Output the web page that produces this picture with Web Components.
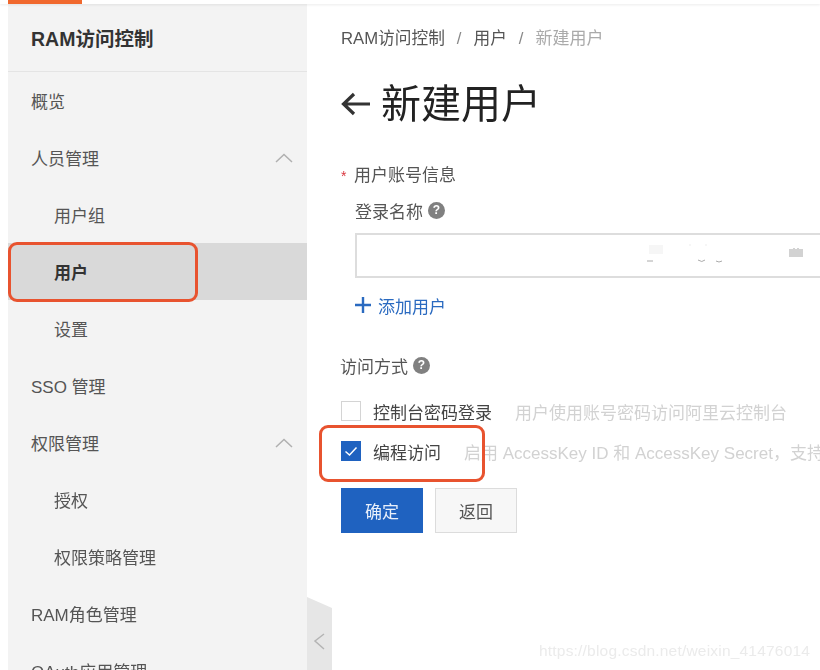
<!DOCTYPE html>
<html lang="zh">
<head>
<meta charset="utf-8">
<title>新建用户</title>
<style>
	html, body { margin: 0; height: 100%; overflow: hidden; background: #fff; }
	body { font-family: "Liberation Sans", "Noto Sans CJK SC", sans-serif; }
</style>
</head>
<body>
<app-shell>
	<side-bar slot="side" title-text="RAM访问控制">
		<nav-item>概览</nav-item>
		<nav-item arrow>人员管理</nav-item>
		<nav-item sub>用户组</nav-item>
		<nav-item sub active>用户</nav-item>
		<nav-item sub>设置</nav-item>
		<nav-item>SSO 管理</nav-item>
		<nav-item arrow>权限管理</nav-item>
		<nav-item sub>授权</nav-item>
		<nav-item sub>权限策略管理</nav-item>
		<nav-item>RAM角色管理</nav-item>
		<nav-item>OAuth应用管理</nav-item>
	</side-bar>
	<new-user-page></new-user-page>
</app-shell>
<script>
// help icon
window.customElements.define('help-icon', class extends HTMLElement {
	constructor() {
		super();
		let shadowRoot = this.attachShadow({mode: 'open'});
		shadowRoot.innerHTML = `
<style>
	:host {
		display: inline-flex;
		width: 17px;
		height: 17px;
		border-radius: 50%;
		background: #808080;
		color: #fff;
		font: bold 12px/17px "Liberation Sans", sans-serif;
		justify-content: center;
	}
</style>
?
    `;
	}
});
// app shell
window.customElements.define('app-shell', class extends HTMLElement {
	constructor() {
		super();
		let shadowRoot = this.attachShadow({mode: 'open'});
		shadowRoot.innerHTML = `
<style>
	:host {
		display: flex;
		flex-direction: column;
		height: 670px;
		overflow: hidden;
		position: relative;
		filter: blur(.4px);
	}
	.top {
		flex: 0 0 4px;
		padding-left: 8px;
		box-shadow: 0 1px 3px rgba(0, 0, 0, .08);
		position: relative;
	}
	.top div {
		width: 74px;
		height: 4px;
		background: #f0682d;
	}
	.body {
		flex: 1;
		display: flex;
		padding-left: 8px;
		min-height: 0;
	}
	.mark {
		position: absolute;
		border: 3px solid #e8532f;
		box-sizing: border-box;
		border-radius: 9px;
	}
	.mark.user { left: 8px; top: 242px; width: 190px; height: 60px; }
	.mark.code { left: 319px; top: 425px; width: 166px; height: 57px; }
	.handle {
		position: absolute;
		left: 307px;
		top: 597px;
		width: 25px;
		height: 73px;
	}
	.wm {
		position: absolute;
		left: 539px;
		top: 642px;
		font: 15.500px "Liberation Sans", sans-serif;
		color: #ebebeb;
		letter-spacing: .2px;
	}
</style>
<div class="top"><div></div></div>
<div class="body"><slot name="side"></slot><slot></slot></div>
<div class="mark user"></div>
<div class="mark code"></div>
<svg class="handle" viewBox="0 0 25 73">
	<path d="M0 0L25 11V73H0Z" fill="#e6e6e6"/>
	<path d="M17 37L8 44L17 52" fill="none" stroke="#b4b4b4" stroke-width="1.500"/>
</svg>
<div class="wm">https://blog.csdn.net/weixin_41476014</div>
    `;
	}
});
// sidebar
window.customElements.define('side-bar', class extends HTMLElement {
	constructor() {
		super();
		let shadowRoot = this.attachShadow({mode: 'open'});
		shadowRoot.innerHTML = `
<style>
	:host {
		display: block;
		flex: 0 0 299px;
		background: #f3f3f3;
		color: #555;
	}
	header {
		height: 67px;
		border-bottom: 1px solid #e4e4e4;
		padding-left: 23px;
		font-size: 19.500px;
		font-weight: bold;
		line-height: 70px;
		color: #333;
	}
</style>
<header></header>
<div class="list"><slot></slot></div>
    `;
		shadowRoot.querySelector('header').textContent = this.getAttribute('title-text');
	}
});
// nav row
window.customElements.define('nav-item', class extends HTMLElement {
	constructor() {
		super();
		let shadowRoot = this.attachShadow({mode: 'open'});
		shadowRoot.innerHTML = `
<style>
	:host {
		display: flex;
		align-items: center;
		justify-content: space-between;
		height: 57px;
		padding: 0 14px 0 23px;
		font-size: 17px;
		color: #555;
	}
	:host([sub]) {
		padding-left: 46px;
	}
	:host([active]) {
		background: #d9d9d9;
		font-weight: bold;
		color: #333;
	}
	svg {
		display: none;
	}
	:host([arrow]) svg {
		display: block;
	}
</style>
<span><slot></slot></span>
<svg width="18" height="10" viewBox="0 0 18 10"><path d="M1 9L9 1.500L17 9" fill="none" stroke="#b0b0b0" stroke-width="1.500"/></svg>
    `;
	}
});
// page content
window.customElements.define('new-user-page', class extends HTMLElement {
	constructor() {
		super();
		let shadowRoot = this.attachShadow({mode: 'open'});
		shadowRoot.innerHTML = `
<style>
	:host {
		display: block;
		flex: 1;
		min-width: 0;
		padding-left: 34px;
		font-size: 17px;
		color: #555;
		overflow: hidden;
	}
	.crumbs {
		display: flex;
		gap: 12px;
		height: 24px;
		line-height: 24px;
		margin-top: 23px;
		font-size: 16.700px;
		color: #555;
	}
	.crumbs i { font-style: normal; color: #888; }
	.crumbs .now { color: #aaa; font-size: 17px; }
	h1 {
		display: flex;
		align-items: center;
		gap: 11px;
		margin: 25px 0 0;
		height: 56px;
		font-size: 40px;
		font-weight: 400;
		color: #222;
		line-height: 56px;
	}
	.req {
		margin-top: 32px;
		height: 24px;
		line-height: 24px;
		display: flex;
	}
	.req b {
		width: 13px;
		color: #d9363e;
		font-weight: 400;
		font-size: 14px;
	}
	.nested {
		padding-left: 14px;
	}
	.label {
		display: flex;
		align-items: center;
		gap: 5px;
		height: 24px;
		margin-left: -1px;
	}
	.nested .label { margin: 10px 0 0; }
	.input {
		margin-top: 11px;
		height: 41px;
		width: 520px;
		border: 2px solid #ddd;
		position: relative;
	}
	.input svg {
		position: absolute;
		left: 270px;
		top: 0;
	}
	.add {
		display: flex;
		align-items: center;
		gap: 7px;
		margin-top: 15px;
		height: 24px;
		color: #2a6ac0;
	}
	.way { margin-top: 36px; }
	.btns {
		display: flex;
		gap: 12px;
		margin-top: 27px;
	}
	button {
		width: 82px;
		height: 45px;
		box-sizing: border-box;
		font: inherit;
		border: 1px solid #dcdcdc;
		background: #f7f7f7;
		color: #555;
		padding: 0;
	}
	button.main {
		background: #1f62c0;
		border-color: #1f62c0;
		color: #e8effa;
	}
</style>
<div class="crumbs"><span>RAM访问控制</span><i>/</i><span>用户</span><i>/</i><span class="now">新建用户</span></div>
<h1>
	<svg width="29" height="24" viewBox="0 0 29 24"><path d="M29 12H3M13 2L2.500 12L13 22" fill="none" stroke="#333" stroke-width="3.200"/></svg>
	<span>新建用户</span>
</h1>
<div class="req"><b>*</b><span>用户账号信息</span></div>
<div class="nested">
	<div class="label"><span>登录名称</span><help-icon></help-icon></div>
	<div class="input">
		<svg width="200" height="41" viewBox="0 0 200 41">
			<g fill="none" stroke="#aaa" stroke-width="1"><path d="M20 26h6M71 25q4 3 7 0M89 26q3 2 6 0"/></g>
			<g fill="#f6f6f6"><rect x="22" y="10" width="14" height="9"/><rect x="62" y="9" width="2" height="2"/><rect x="78" y="9" width="2" height="2"/></g>
			<path d="M162 22V14h4v-1h2v1h2v-1h2v1h4v8Z" fill="#d2d2d2"/>
		</svg>
	</div>
	<div class="add">
		<svg width="16" height="16" viewBox="0 0 16 16"><path d="M8 0V16M0 8H16" stroke="#2a6ac0" stroke-width="2.400"/></svg>
		<span>添加用户</span>
	</div>
</div>
<div class="label way"><span>访问方式</span><help-icon></help-icon></div>
<check-row style="margin-top:24px" hint="用户使用账号密码访问阿里云控制台" hint-gap="23">控制台密码登录</check-row>
<check-row style="margin-top:20px" checked hint="启用 AccessKey ID 和 AccessKey Secret，支持" hint-gap="23">编程访问</check-row>
<div class="btns"><button class="main">确定</button><button>返回</button></div>
    `;
	}
});
// checkbox row
window.customElements.define('check-row', class extends HTMLElement {
	constructor() {
		super();
		let shadowRoot = this.attachShadow({mode: 'open'});
		shadowRoot.innerHTML = `
<style>
	:host {
		display: flex;
		align-items: center;
		height: 20px;
		white-space: nowrap;
		color: #444;
	}
	.box {
		flex: 0 0 auto;
		width: 20px;
		height: 20px;
		box-sizing: border-box;
		border: 1px solid #d4d4d4;
		background: #fff;
		margin-right: 12px;
	}
	:host([checked]) .box {
		background: #1f62c0;
		border-color: #1f62c0;
	}
	.box svg { display: none; }
	:host([checked]) .box svg { display: block; }
	.hint { color: #d2d2d2; }
</style>
<span class="box"><svg width="18" height="18" viewBox="0 0 18 18"><path d="M3.500 9.500L7.500 13L14.500 5.500" fill="none" stroke="#fff" stroke-width="1.500"/></svg></span>
<span><slot></slot></span>
<span class="hint"></span>
    `;
		let hint = shadowRoot.querySelector('.hint');
		hint.textContent = this.getAttribute('hint');
		hint.style.marginLeft = this.getAttribute('hint-gap') + 'px';
	}
});
</script>
</body>
</html>
